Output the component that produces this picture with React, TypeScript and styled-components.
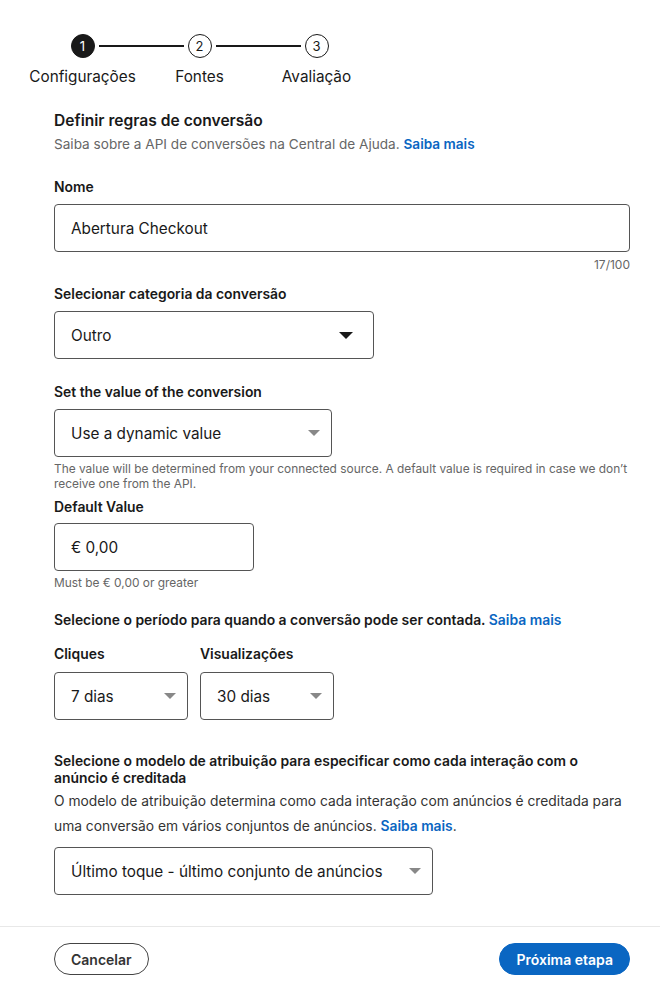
import React from "react";
import styled, { createGlobalStyle } from "styled-components";

const GlobalStyle = createGlobalStyle`
  * { box-sizing: border-box; }
  body {
    margin: 0;
    background: #ffffff;
    font-family: Inter, Roboto, "Liberation Sans", sans-serif;
    color: #191919;
  }
`;

const Page = styled.div`
  width: 660px;
  min-height: 991px;
  display: flex;
  flex-direction: column;
`;

const Stepper = styled.div`
  display: flex;
  align-items: flex-start;
  padding: 34px 0 0 24px;
`;

const Step = styled.div`
  width: 117px;
  display: flex;
  flex-direction: column;
  align-items: center;
`;

const StepTrack = styled.div`
  height: 24px;
  width: 100%;
  display: flex;
  align-items: center;
  justify-content: center;
  position: relative;
`;

const Connector = styled.div`
  position: absolute;
  left: calc(50% + 16px);
  width: 85px;
  top: 11px;
  height: 1.5px;
  background: #191919;
`;

const StepCircle = styled.div<{ $active?: boolean }>`
  width: 24px;
  height: 24px;
  border-radius: 50%;
  display: flex;
  align-items: center;
  justify-content: center;
  font-size: 13px;
  border: 1px solid #191919;
  background: ${(p) => (p.$active ? "#191919" : "#fff")};
  color: ${(p) => (p.$active ? "#fff" : "#191919")};
`;

const StepLabel = styled.div`
  margin-top: 9px;
  font-size: 15.3px;
  white-space: nowrap;
  color: #191919;
`;

const Body = styled.div`
  flex: 1;
  padding: 24px 30px 0 54px;
`;

const Title = styled.h2`
  margin: 0;
  font-size: 15.6px;
  font-weight: 600;
  line-height: 22px;
`;

const Subtitle = styled.p`
  margin: 2px 0 0;
  font-size: 13.6px;
  color: #666;
  line-height: 20px;
`;

const LinkText = styled.a`
  color: #0a66c2;
  font-weight: 600;
  text-decoration: none;
`;

const Label = styled.div<{ $top?: number; $bottom?: number }>`
  font-size: 13.9px;
  font-weight: 600;
  line-height: 17px;
  margin-top: ${(p) => p.$top ?? 24}px;
  margin-bottom: ${(p) => p.$bottom ?? 8}px;
`;

const Field = styled.div<{ $width: string }>`
  width: ${(p) => p.$width};
  height: 48px;
  border: 1px solid #555;
  border-radius: 4px;
  display: flex;
  align-items: center;
  padding: 0 16px;
  font-size: 15.3px;
  color: #191919;
`;

const Caret = styled.span<{ $dark?: boolean }>`
  margin-left: auto;
  width: 0;
  height: 0;
  border-left: ${(p) => (p.$dark ? 7 : 6)}px solid transparent;
  border-right: ${(p) => (p.$dark ? 7 : 6)}px solid transparent;
  border-top: ${(p) => (p.$dark ? 7 : 6)}px solid ${(p) => (p.$dark ? "#191919" : "#888")};
  margin-right: ${(p) => (p.$dark ? 4 : -5)}px;
`;

const Counter = styled.div`
  text-align: right;
  font-size: 12px;
  color: #666;
  margin-top: 6px;
  line-height: 14px;
`;

const Helper = styled.div<{ $top?: number }>`
  font-size: 11.9px;
  color: #666;
  line-height: 15px;
  margin-top: ${(p) => p.$top ?? 5}px;
`;

const Row = styled.div`
  display: flex;
  gap: 12px;
`;

const Column = styled.div`
  display: flex;
  flex-direction: column;
`;

const Description = styled.p`
  margin: 2px 0 0;
  font-size: 13.8px;
  line-height: 25px;
  color: #333;
`;

const Spacer = styled.div`
  height: 8px;
`;

const Footer = styled.div`
  border-top: 1px solid #e8e8e8;
  margin-top: 31px;
  padding: 16px 30px 16px 54px;
  display: flex;
  justify-content: space-between;
  align-items: center;
`;

const Button = styled.button<{ $primary?: boolean }>`
  height: 32px;
  border-radius: 16px;
  padding: 0 16px;
  font-family: inherit;
  font-size: 14px;
  font-weight: 600;
  border: 1px solid ${(p) => (p.$primary ? "#0a66c2" : "#444")};
  background: ${(p) => (p.$primary ? "#0a66c2" : "#fff")};
  color: ${(p) => (p.$primary ? "#fff" : "#333")};
`;

const steps = ["Configurações", "Fontes", "Avaliação"];

export default function App() {
  return (
    <Page>
      <GlobalStyle />
      <Stepper>
        {steps.map((s, i) => (
          <Step key={s}>
            <StepTrack>
              <StepCircle $active={i === 0}>{i + 1}</StepCircle>
              {i < steps.length - 1 && <Connector />}
            </StepTrack>
            <StepLabel>{s}</StepLabel>
          </Step>
        ))}
      </Stepper>
      <Body>
        <Title>Definir regras de conversão</Title>
        <Subtitle>
          Saiba sobre a API de conversões na Central de Ajuda. <LinkText>Saiba mais</LinkText>
        </Subtitle>

        <Label $top={25}>Nome</Label>
        <Field $width="576px">Abertura Checkout</Field>
        <Counter>17/100</Counter>

        <Label $top={14}>Selecionar categoria da conversão</Label>
        <Field $width="320px">
          Outro
          <Caret $dark />
        </Field>

        <Label $top={25}>Set the value of the conversion</Label>
        <Field $width="278px">
          Use a dynamic value
          <Caret />
        </Field>
        <Helper $top={4}>
          The value will be determined from your connected source. A default value is required in case we don’t
          receive one from the API.
        </Helper>

        <Label $top={8} $bottom={7}>Default Value</Label>
        <Field $width="200px">€ 0,00</Field>
        <Helper $top={4}>Must be € 0,00 or greater</Helper>

        <Label $top={22}>
          Selecione o período para quando a conversão pode ser contada. <LinkText>Saiba mais</LinkText>
        </Label>
        <Row>
          <Column>
            <Label $top={9} $bottom={9}>Cliques</Label>
            <Field $width="134px">
              7 dias
              <Caret />
            </Field>
          </Column>
          <Column>
            <Label $top={9} $bottom={9}>Visualizações</Label>
            <Field $width="134px">
              30 dias
              <Caret />
            </Field>
          </Column>
        </Row>

        <Label $top={33} $bottom={0}>
          Selecione o modelo de atribuição para especificar como cada interação com o anúncio é creditada
        </Label>
        <Description>
          O modelo de atribuição determina como cada interação com anúncios é creditada para uma conversão em vários
          conjuntos de anúncios. <LinkText>Saiba mais</LinkText>.
        </Description>
        <Spacer />
        <Field $width="379px">
          Último toque - último conjunto de anúncios
          <Caret />
        </Field>
      </Body>
      <Footer>
        <Button>Cancelar</Button>
        <Button $primary>Próxima etapa</Button>
      </Footer>
    </Page>
  );
}
